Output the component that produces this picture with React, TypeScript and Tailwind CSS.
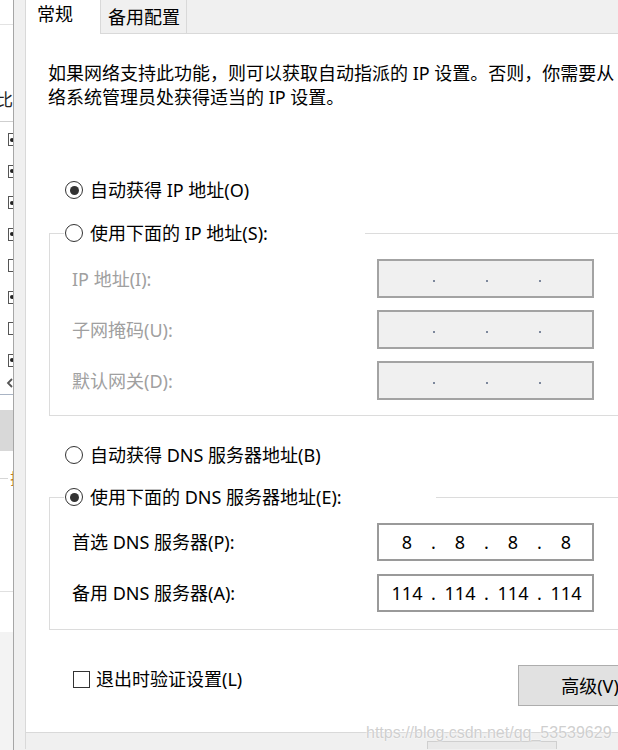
import React from 'react'

const sideChecks = [true, true, true, true, false, true, false, true]

function Radio({ checked }: { checked?: boolean }) {
  return (
    <span className="flex h-[18px] w-[18px] shrink-0 items-center justify-center rounded-full border border-[#333] bg-white">
      {checked && <span className="h-[9px] w-[9px] rounded-full bg-[#333]" />}
    </span>
  )
}

function IpField({ values, disabled }: { values?: string[]; disabled?: boolean }) {
  const segs = values ?? ['', '', '', '']
  return (
    <div
      className={`flex h-full w-[217px] items-center border-2 pl-[6px] ${
        disabled ? 'border-[#a3a3a3] bg-[#f0f0f0]' : 'border-[#9a9a9a] bg-white'
      }`}
    >
      {segs.map((v, i) => (
        <React.Fragment key={i}>
          <span className="w-[44px] text-center">{v}</span>
          {i < 3 &&
            (disabled ? (
              <span className="flex w-[9px] justify-center pt-[5px]">
                <span className="h-[2px] w-[2px] bg-[#7d889c]" />
              </span>
            ) : (
              <span className="w-[9px] text-center">.</span>
            ))}
        </React.Fragment>
      ))}
    </div>
  )
}

function SideStrip() {
  return (
    <div className="flex w-[14px] shrink-0 flex-col overflow-hidden border-r border-[#a6a6a6] bg-white">
      <div className="h-[25px] border-b border-[#e3e3e3]" />
      <div className="h-[97px] overflow-hidden border-b border-[#cfcfcf] pt-[63px]">
        <span className="ml-[-4px] block text-[17px] leading-[24px] text-[#222]">比</span>
      </div>
      <div className="flex flex-col pt-[2px]">
        {sideChecks.map((c, i) => (
          <div key={i} className="flex h-[31.5px] items-center">
            <span className="ml-[8px] flex h-[13px] w-[8px] items-center border-y border-l border-[#555] bg-white">
              {c && <span className="ml-[1px] h-[4px] w-[4px] rounded-full bg-[#222]" />}
            </span>
          </div>
        ))}
      </div>
      <div className="flex h-[13px] items-center pl-[6px]">
        <svg width="7" height="10" viewBox="0 0 7 10">
          <path d="M6 1 L2 5 L6 9" fill="none" stroke="#555" strokeWidth="1.8" />
        </svg>
      </div>
      <div className="h-[6px] border-b border-[#a9b4c4]" />
      <div className="h-[15px]" />
      <div className="h-[41px] bg-[#d8d8d8]" />
      <div className="h-[19px]" />
      <div className="flex h-[16px] w-[40px] items-center">
        <span className="h-px w-[8px] shrink-0 bg-[#d6d6d6]" />
        <span className="ml-[2px] shrink-0 text-[15px] leading-[16px] text-[#c27a1c]">拉</span>
      </div>
      <div className="h-[106px] border-b border-[#e0e0e0]" />
      <div className="h-[40px]" />
      <div className="flex-1 bg-[#f3f3f3]" />
    </div>
  )
}

export default function App() {
  return (
    <div className="relative flex h-[750px] w-[618px] overflow-hidden bg-[#f0f0f0] font-['Noto_Sans','Noto_Sans_CJK_SC',sans-serif] text-[18px] leading-[24px] text-black">
      <SideStrip />

      <div className="flex shrink-0 flex-col pl-[11px]">
        <div className="flex w-[680px] flex-col border-l border-[#d9d9d9]">
          {/* tabs */}
          <div className="flex h-[34px]">
            <div className="w-[75px] border-r border-[#d9d9d9] bg-white pl-[11px] pt-[2px]">常规</div>
            <div className="w-[86px] border-r border-b border-[#d9d9d9] bg-[#f0f0f0] pl-[7px] pt-[5px]">备用配置</div>
            <div className="flex-1 border-b border-[#d9d9d9]" />
          </div>

          {/* panel */}
          <div className="flex flex-col border-b border-[#d9d9d9] bg-white pb-[26px] pl-[23px]">
            <div className="ml-[-1px] mt-[27px] whitespace-nowrap">
              <div>如果网络支持此功能，则可以获取自动指派的 IP 设置。否则，你需要从</div>
              <div>络系统管理员处获得适当的 IP 设置。</div>
            </div>

            <div className="ml-[16px] mt-[69px] flex h-[24px] items-center gap-[7px]">
              <Radio checked />
              <span>自动获得 IP 地址(O)</span>
            </div>

            <fieldset className="mt-[19px] w-[600px] border border-[#dcdcdc]">
              <legend className="ml-[14px] w-[301px]">
                <div className="flex h-[24px] items-center gap-[7px] pl-[1px]">
                  <Radio />
                  <span>使用下面的 IP 地址(S):</span>
                </div>
              </legend>
              <div className="flex flex-col gap-[12px] pb-[15px] pl-[22px] pt-[14px] text-[#a0a0a0]">
                {['IP 地址(I):', '子网掩码(U):', '默认网关(D):'].map((l) => (
                  <div key={l} className="flex h-[39px] items-center">
                    <span className="w-[305px]">{l}</span>
                    <IpField disabled />
                  </div>
                ))}
              </div>
            </fieldset>

            <div className="ml-[16px] mt-[27px] flex h-[24px] items-center gap-[7px]">
              <Radio />
              <span>自动获得 DNS 服务器地址(B)</span>
            </div>

            <fieldset className="mt-[18px] w-[600px] border border-[#dcdcdc]">
              <legend className="ml-[14px] w-[372px]">
                <div className="flex h-[24px] items-center gap-[7px] pl-[1px]">
                  <Radio checked />
                  <span>使用下面的 DNS 服务器地址(E):</span>
                </div>
              </legend>
              <div className="flex flex-col gap-[13px] pb-[17px] pl-[22px] pt-[14px]">
                <div className="flex h-[38px] items-center">
                  <span className="w-[305px]">首选 DNS 服务器(P):</span>
                  <IpField values={['8', '8', '8', '8']} />
                </div>
                <div className="flex h-[38px] items-center">
                  <span className="w-[305px]">备用 DNS 服务器(A):</span>
                  <IpField values={['114', '114', '114', '114']} />
                </div>
              </div>
            </fieldset>

            <div className="mt-[35px] flex w-[613px] items-start">
              <label className="ml-[24px] mt-[2px] flex h-[24px] items-center gap-[6px]">
                <span className="h-[17px] w-[17px] border border-[#333] bg-white" />
                <span>退出时验证设置(L)</span>
              </label>
              <button className="ml-auto h-[41px] w-[144px] border border-[#adadad] bg-[#e1e1e1]">高级(V)</button>
            </div>
          </div>

          {/* bottom strip */}
          <div className="h-[16px] pl-[401px] pt-[8px]">
            <div className="h-full w-[130px] border-x border-t border-[#cfcfcf] bg-[#e9e9e9]" />
          </div>
        </div>
      </div>

      <div className="absolute left-[366px] top-[723px] font-['Liberation_Sans',sans-serif] text-[16px] leading-[20px] text-[#cfcfcf] [text-shadow:0_0_2px_#fff,0_0_1px_#fff]">
        https://blog.csdn.net/qq_53539629
      </div>
    </div>
  )
}
